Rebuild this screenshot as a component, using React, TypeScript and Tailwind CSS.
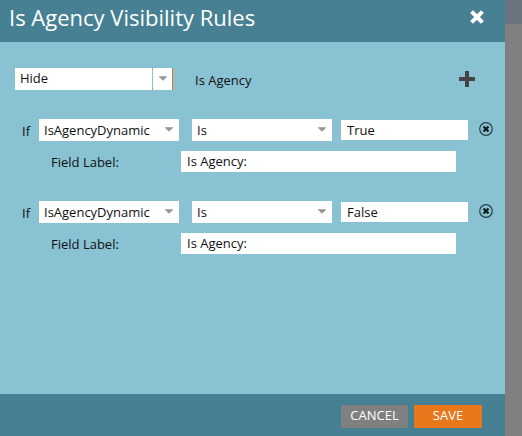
import { useState } from "react";

const initialRules = [
  { id: 1, field: "IsAgencyDynamic", operator: "Is", value: "True", label: "Is Agency:" },
  { id: 2, field: "IsAgencyDynamic", operator: "Is", value: "False", label: "Is Agency:" },
];

function Arrow() {
  return (
    <svg width="8" height="5" viewBox="0 0 8 5" aria-hidden="true">
      <path d="M0 0h8v1L4.5 4.5h-1L0 1z" fill="#b0b0b0" />
      <path d="M1 1h6L4.5 3.5h-1z" fill="#929292" />
    </svg>
  );
}

function Select({ label, options }: { label: string; options: string[] }) {
  return (
    <div className="relative">
      <select
        aria-label={label}
        className="block h-[22px] w-full appearance-none rounded-none bg-white pr-5 pl-[5px] leading-[22px] outline-none"
      >
        {options.map((option) => (
          <option key={option}>{option}</option>
        ))}
      </select>
      <span className="pointer-events-none absolute top-2 right-[6px]">
        <Arrow />
      </span>
    </div>
  );
}

function RemoveIcon() {
  return (
    <svg width="14" height="14" viewBox="0 0 14 14" fill="none" aria-hidden="true">
      <circle cx="7" cy="7" r="6.3" stroke="#26414a" strokeWidth="1.2" />
      <path d="M4.5 4.5l5 5M9.5 4.5l-5 5" stroke="#10191c" strokeWidth="2.2" />
    </svg>
  );
}

function Rule({ rule, onRemove }: { rule: any; onRemove: () => void }) {
  const labelId = `field-label-${rule.id}`;

  return (
    <div>
      <div className="flex h-[22px] items-center">
        <span className="w-[17px] shrink-0 pt-[2px]">If</span>
        <div className="grid flex-1 grid-cols-[140fr_153fr_136fr] items-center">
          <Select label="Field" options={[rule.field]} />
          <div className="pl-[13px]">
            <Select label="Operator" options={[rule.operator, "Is Not"]} />
          </div>
          <input
            aria-label="Value"
            defaultValue={rule.value}
            className="ml-[9px] h-5 min-w-0 bg-white px-[6px] outline-none"
          />
        </div>
        <button type="button" aria-label="Remove rule" onClick={onRemove} className="ml-[11px] pb-[2px]">
          <RemoveIcon />
        </button>
      </div>
      <div className="mt-[10px] mr-[37px] ml-[29px] flex h-[21px] items-center">
        <label htmlFor={labelId} className="w-[130px] shrink-0">
          Field Label:
        </label>
        <input
          id={labelId}
          defaultValue={rule.label}
          className="h-[21px] min-w-0 flex-1 bg-white px-[6px] pb-[2px] outline-none"
        />
      </div>
    </div>
  );
}

export default function App() {
  const [rules, setRules] = useState(initialRules);

  const addRule = () =>
    setRules([...rules, { ...initialRules[0], id: Date.now(), value: "" }]);

  return (
    <div className="flex min-h-screen bg-[#808082] font-['Open_Sans',sans-serif] text-[13px] leading-5 text-[#111]">
      <section role="dialog" aria-labelledby="dialog-title" className="flex flex-1 flex-col bg-[#89c2d3]">
        <header className="flex h-[42px] items-center justify-between bg-[#468092] pr-[21px] pb-2 pl-[9px] text-white">
          <h1 id="dialog-title" className="text-[22px] leading-8">
            Is Agency Visibility Rules
          </h1>
          <button type="button" aria-label="Close">
            <svg width="14" height="14" viewBox="0 0 14 14" aria-hidden="true">
              <path d="M3 3l8 8M11 3l-8 8" stroke="#fff" strokeWidth="4" strokeLinecap="square" />
            </svg>
          </button>
        </header>

        <main className="flex-1 pt-[26px] pr-3 pb-6">
          <div className="flex h-[22px] items-center pr-[18px] pl-[15px]">
            <div className="relative w-[158px]">
              <select
                aria-label="Visibility"
                className="block h-[22px] w-full appearance-none rounded-none bg-white pr-6 pb-[2px] pl-[5px] leading-5 outline-none"
              >
                <option>Hide</option>
                <option>Show</option>
              </select>
              <span className="pointer-events-none absolute inset-y-0 right-0 flex w-[21px] border-r border-[#e8761b]">
                <span className="w-px border-y border-[#e8761b] bg-[#89c2d3]" />
                <span className="pt-2 pl-[6px]">
                  <Arrow />
                </span>
              </span>
            </div>
            <span className="ml-[22px] pt-[2px]">Is Agency</span>
            <button type="button" aria-label="Add rule" onClick={addRule} className="ml-auto">
              <svg width="16" height="16" viewBox="0 0 16 16" aria-hidden="true">
                <path d="M8 0v16M0 8h16" stroke="#444" strokeWidth="4" />
              </svg>
            </button>
          </div>

          <div className="mt-[29px] flex flex-col gap-[29px] pl-[22px]">
            {rules.map((rule) => (
              <Rule
                key={rule.id}
                rule={rule}
                onRemove={() => setRules(rules.filter((r) => r.id !== rule.id))}
              />
            ))}
          </div>
        </main>

        <footer className="flex h-[42px] items-center justify-end gap-[6px] bg-[#468092] pt-[2px] pr-[23px] text-white">
          <button type="button" className="h-[23px] w-[67px] bg-[#808080] pb-[2px]">
            CANCEL
          </button>
          <button type="button" className="h-[23px] w-[68px] bg-[#e8761b] pb-[2px]">
            SAVE
          </button>
        </footer>
      </section>

      {/* Page behind the dialog */}
      <div className="w-[17px] shrink-0">
        <div className="h-6 bg-[#6b7580]" />
      </div>
    </div>
  );
}
